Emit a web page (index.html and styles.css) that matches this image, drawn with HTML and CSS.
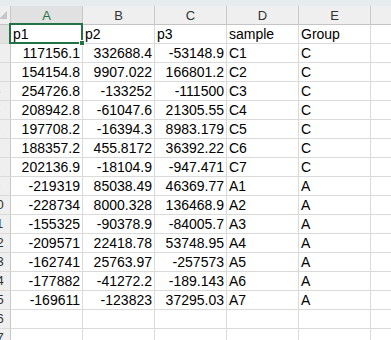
FILE: index.html
```html
<!DOCTYPE html>
<html lang="en">
<head>
    <meta charset="UTF-8">
    <title>Sheet1</title>
    <link rel="stylesheet" href="styles.css">
</head>
<body>
    <div class="top-strip"></div>
    <div class="sheet">
        <div class="row head">
            <div class="corner"></div>
            <div class="col-h sel-h">A</div>
            <div class="col-h">B</div>
            <div class="col-h">C</div>
            <div class="col-h">D</div>
            <div class="col-h">E</div>
            <div class="col-h"></div>
        </div>
        <div class="row">
            <div class="row-h sel-h">1</div>
            <div class="cell sel">p1</div>
            <div class="cell">p2</div>
            <div class="cell">p3</div>
            <div class="cell">sample</div>
            <div class="cell">Group</div>
            <div class="cell"></div>
        </div>
        <div class="row"><div class="row-h">2</div><div class="cell num">117156.1</div><div class="cell num">332688.4</div><div class="cell num">-53148.9</div><div class="cell">C1</div><div class="cell">C</div><div class="cell"></div></div>
        <div class="row"><div class="row-h">3</div><div class="cell num">154154.8</div><div class="cell num">9907.022</div><div class="cell num">166801.2</div><div class="cell">C2</div><div class="cell">C</div><div class="cell"></div></div>
        <div class="row"><div class="row-h">4</div><div class="cell num">254726.8</div><div class="cell num">-133252</div><div class="cell num">-111500</div><div class="cell">C3</div><div class="cell">C</div><div class="cell"></div></div>
        <div class="row"><div class="row-h">5</div><div class="cell num">208942.8</div><div class="cell num">-61047.6</div><div class="cell num">21305.55</div><div class="cell">C4</div><div class="cell">C</div><div class="cell"></div></div>
        <div class="row"><div class="row-h">6</div><div class="cell num">197708.2</div><div class="cell num">-16394.3</div><div class="cell num">8983.179</div><div class="cell">C5</div><div class="cell">C</div><div class="cell"></div></div>
        <div class="row"><div class="row-h">7</div><div class="cell num">188357.2</div><div class="cell num">455.8172</div><div class="cell num">36392.22</div><div class="cell">C6</div><div class="cell">C</div><div class="cell"></div></div>
        <div class="row"><div class="row-h">8</div><div class="cell num">202136.9</div><div class="cell num">-18104.9</div><div class="cell num">-947.471</div><div class="cell">C7</div><div class="cell">C</div><div class="cell"></div></div>
        <div class="row"><div class="row-h">9</div><div class="cell num">-219319</div><div class="cell num">85038.49</div><div class="cell num">46369.77</div><div class="cell">A1</div><div class="cell">A</div><div class="cell"></div></div>
        <div class="row"><div class="row-h">10</div><div class="cell num">-228734</div><div class="cell num">8000.328</div><div class="cell num">136468.9</div><div class="cell">A2</div><div class="cell">A</div><div class="cell"></div></div>
        <div class="row"><div class="row-h">11</div><div class="cell num">-155325</div><div class="cell num">-90378.9</div><div class="cell num">-84005.7</div><div class="cell">A3</div><div class="cell">A</div><div class="cell"></div></div>
        <div class="row"><div class="row-h">12</div><div class="cell num">-209571</div><div class="cell num">22418.78</div><div class="cell num">53748.95</div><div class="cell">A4</div><div class="cell">A</div><div class="cell"></div></div>
        <div class="row"><div class="row-h">13</div><div class="cell num">-162741</div><div class="cell num">25763.97</div><div class="cell num">-257573</div><div class="cell">A5</div><div class="cell">A</div><div class="cell"></div></div>
        <div class="row"><div class="row-h">14</div><div class="cell num">-177882</div><div class="cell num">-41272.2</div><div class="cell num">-189.143</div><div class="cell">A6</div><div class="cell">A</div><div class="cell"></div></div>
        <div class="row"><div class="row-h">15</div><div class="cell num">-169611</div><div class="cell num">-123823</div><div class="cell num">37295.03</div><div class="cell">A7</div><div class="cell">A</div><div class="cell"></div></div>
        <div class="row"><div class="row-h">16</div><div class="cell"></div><div class="cell"></div><div class="cell"></div><div class="cell"></div><div class="cell"></div><div class="cell"></div></div>
        <div class="row"><div class="row-h">17</div><div class="cell"></div><div class="cell"></div><div class="cell"></div><div class="cell"></div><div class="cell"></div><div class="cell"></div></div>
    </div>
</body>
</html>
```

FILE: styles.css
```css
body {
    margin: 0;
    overflow: hidden;
    background: #fff;
    font-family: "Liberation Sans", Arial, sans-serif;
}
.top-strip {
    height: 6px;
    background: #e6ebed;
}
.sheet {
    margin-left: -17px;
}
.row {
    display: grid;
    grid-template-columns: 28px repeat(5, 72px) 60px;
    height: 19px;
}
.row > div {
    box-sizing: border-box;
    border-right: 1px solid #dadada;
    border-bottom: 1px solid #dadada;
    white-space: nowrap;
    overflow: hidden;
}
.cell {
    font-size: 14px;
    line-height: 18px;
    color: #000;
    padding: 0 2px 0 2px;
}
.num {
    text-align: right;
}
.head > div {
    background: #efefef;
    border-right-color: #c8c8c8;
    border-bottom-color: #c4c4c4;
    font-size: 13px;
    line-height: 19px;
    color: #333;
    text-align: center;
}
.row-h {
    background: #efefef;
    border-right-color: #c8c8c8 !important;
    font-size: 13px;
    line-height: 18px;
    color: #333;
    text-align: center;
}
.corner {
    position: relative;
}
.corner::after {
    content: "";
    position: absolute;
    right: 3px;
    bottom: 5px;
    width: 0;
    height: 0;
    border-left: 8px solid transparent;
    border-bottom: 8px solid #c6c6c6;
}
.head .sel-h {
    background: #e1e1e1;
    color: #217346;
}
.row-h.sel-h {
    background: #e1e1e1;
}
.row > .sel {
    position: relative;
    z-index: 1;
    overflow: visible;
}
.sel::before {
    content: "";
    position: absolute;
    left: -2px;
    top: -2px;
    right: -1px;
    bottom: -1px;
    border: 2px solid #217346;
}
.sel::after {
    content: "";
    position: absolute;
    right: -3px;
    bottom: -3px;
    width: 4px;
    height: 4px;
    background: #217346;
    border: 1px solid #fff;
}
```
